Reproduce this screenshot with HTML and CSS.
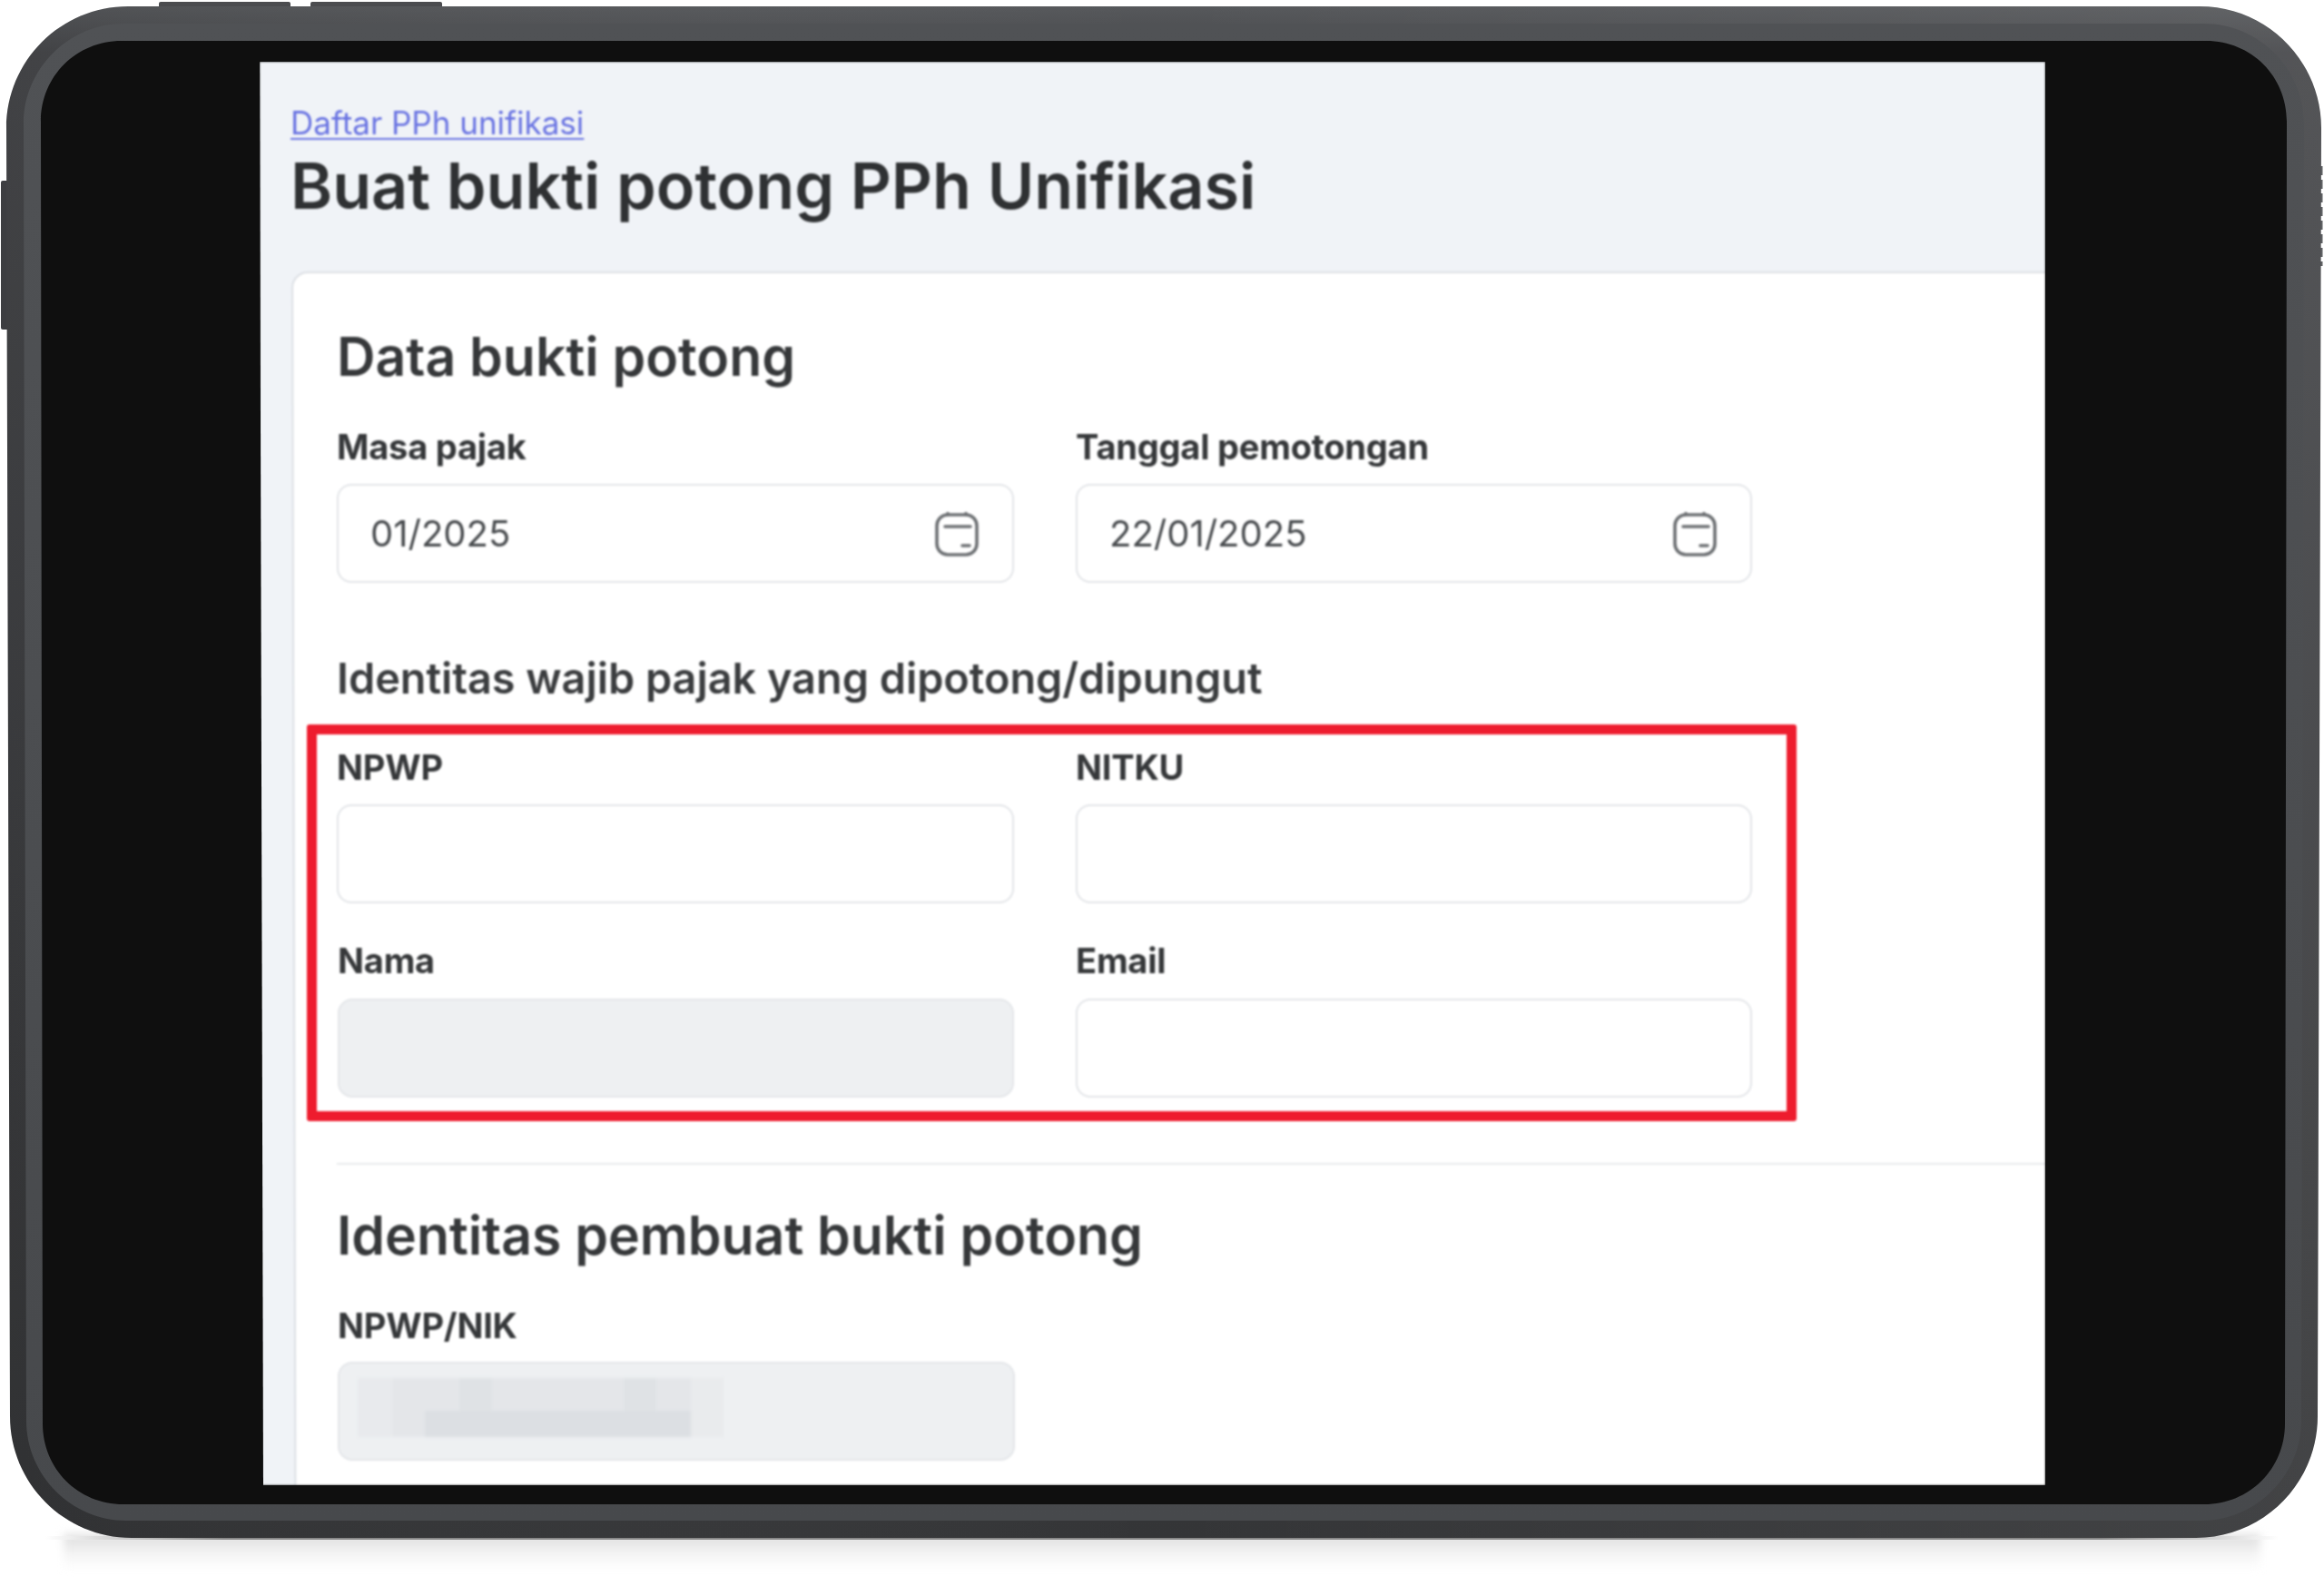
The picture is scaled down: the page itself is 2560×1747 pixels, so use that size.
FILE: index.html
```html
<!DOCTYPE html>
<html lang="id">
<head>
<meta charset="utf-8">
<title>Buat bukti potong PPh Unifikasi</title>
<link rel="stylesheet" href="styles.css">
</head>
<body>
<main class="stage">
  <div class="floor-shadow"></div>
  <div class="floor-line"></div>
  <svg class="device" viewBox="0 0 2560 1747" width="2560" height="1747" aria-hidden="true">
    <defs>
      <linearGradient id="ringV" x1="0" y1="0" x2="0" y2="1">
        <stop offset="0" stop-color="#56585b"/>
        <stop offset="0.03" stop-color="#47484b"/>
        <stop offset="1" stop-color="#343537"/>
      </linearGradient>
      <linearGradient id="ringH" x1="0" y1="0" x2="1" y2="0">
        <stop offset="0" stop-color="#000" stop-opacity="0.08"/>
        <stop offset="0.5" stop-color="#fff" stop-opacity="0"/>
        <stop offset="1" stop-color="#fff" stop-opacity="0.07"/>
      </linearGradient>
      <linearGradient id="bandV" x1="0" y1="0" x2="0" y2="1">
        <stop offset="0" stop-color="#505255"/>
        <stop offset="1" stop-color="#47494c"/>
      </linearGradient>
    </defs>
    <rect class="device-key" x="175" y="2" width="145" height="8" rx="2"/>
    <rect class="device-key" x="342" y="2" width="145" height="8" rx="2"/>
    <rect class="device-key-side" x="1" y="199" width="9" height="164" rx="2"/>
    <line class="device-grille" x1="2557" y1="183" x2="2557" y2="293"/>
    <path fill="url(#ringV)" d="M141 7H2423C2497 7 2557 67 2557 141L2553 1560C2553 1634 2493 1694 2419 1694H145C71 1694 11 1634 11 1560L7 141C7 67 67 7 141 7Z"/>
    <path fill="url(#ringH)" d="M141 7H2423C2497 7 2557 67 2557 141L2553 1560C2553 1634 2493 1694 2419 1694H145C71 1694 11 1634 11 1560L7 141C7 67 67 7 141 7Z"/>
    <path fill="url(#bandV)" d="M136 26H2428C2488 26 2538 76 2538 136L2535 1565C2535 1625 2485 1675 2425 1675H139C79 1675 29 1625 29 1565L26 136C26 76 76 26 136 26Z"/>
    <path fill="#0f0f0f" d="M134 45H2430C2480 45 2519 84 2519 134L2517 1568C2517 1618 2478 1657 2428 1657H136C86 1657 47 1618 47 1568L45 134C45 84 84 45 134 45Z"/>
  </svg>

  <section class="screen">
    <header class="page-head">
      <a class="crumb" href="#">Daftar PPh unifikasi</a>
      <h1 class="page-title">Buat bukti potong PPh Unifikasi</h1>
    </header>

    <div class="card">
      <h2 class="section-title">Data bukti potong</h2>
      <div class="form-grid">
        <div class="group">
          <label class="label">Masa pajak</label>
          <div class="field">
            <span class="value">01/2025</span>
            <svg class="cal" viewBox="0 0 48 50" aria-hidden="true"><path d="M14 2.5V4M34 2.5V4"/><rect x="2" y="4" width="44" height="44" rx="12"/><path d="M11 17H39M30 38H38"/></svg>
          </div>
        </div>
        <div class="group">
          <label class="label">Tanggal pemotongan</label>
          <div class="field">
            <span class="value">22/01/2025</span>
            <svg class="cal" viewBox="0 0 48 50" aria-hidden="true"><path d="M14 2.5V4M34 2.5V4"/><rect x="2" y="4" width="44" height="44" rx="12"/><path d="M11 17H39M30 38H38"/></svg>
          </div>
        </div>
      </div>

      <h3 class="sub-title">Identitas wajib pajak yang dipotong/dipungut</h3>
      <div class="highlighted">
        <div class="form-grid">
          <div class="group"><label class="label">NPWP</label><div class="field"></div></div>
          <div class="group"><label class="label">NITKU</label><div class="field"></div></div>
          <div class="group group-low nudge"><label class="label">Nama</label><div class="field field-off"></div></div>
          <div class="group group-low"><label class="label">Email</label><div class="field"></div></div>
        </div>
      </div>

      <hr class="rule">

      <h2 class="section-title section-last">Identitas pembuat bukti potong</h2>
      <div class="group group-last">
        <label class="label">NPWP/NIK</label>
        <div class="field field-off field-wide">
          <div class="redact"><div class="redact-core"></div></div>
        </div>
      </div>
    </div>
  </section>
</main>
</body>
</html>
```
FILE: styles.css
```css
* { box-sizing: border-box; }
html, body { margin: 0; padding: 0; background: #fff; }
body { font-family: Inter, "Liberation Sans", sans-serif; color: #333; }

.stage { position: relative; width: 2560px; height: 1747px; overflow: hidden; }

.device { position: absolute; left: 0; top: 0; display: block; }
.device-key { fill: #4b4c4f; }
.device-key-side { fill: #3d3e41; }
.device-grille { stroke: #606265; stroke-width: 3; stroke-dasharray: 10 5; }

.floor-shadow {
  position: absolute; left: 70px; top: 1690px; width: 2420px; height: 40px;
  background: linear-gradient(#dcdcdc, #f5f5f5 55%, #fff);
  filter: blur(5px);
}
.floor-line {
  position: absolute; left: 50px; top: 1692px; width: 2460px; height: 4px;
  background: linear-gradient(90deg, #fff, #888 8%, #888 92%, #fff);
}

.screen {
  position: absolute; left: 286px; top: 68px; width: 1967px; height: 1568px;
  overflow: hidden;
  background: #f0f3f7;
  clip-path: polygon(0 0, 100% 0, 100% 100%, 4px 100%);
  filter: blur(0.9px);
}

.page-head { padding: 43px 0 0 34px; }
.crumb {
  display: block; width: max-content;
  font-size: 35px; line-height: 48px; color: #6a74e2;
  text-decoration: underline; text-underline-offset: 4px; text-decoration-thickness: 2px;
}
.page-title {
  margin: 4px 0 0; font-size: 70.1px; line-height: 84px; font-weight: 600;
  color: #2f3133; white-space: nowrap;
}

.card {
  position: relative; margin: 52px -40px 0 35px; height: 1400px;
  padding: 62px 0 0 50px;
}
.card::before {
  content: ""; position: absolute; inset: 0;
  background: #fff; border: 2px solid #dde0e5; border-radius: 18px;
  transform-origin: 0 0; transform: skewX(0.146deg);
}
.card > * { position: relative; }

.section-title { margin: 0; font-size: 58.9px; line-height: 64px; font-weight: 600; color: #36383a; white-space: nowrap; }
.section-last { margin-top: 46px; }
.sub-title { margin: 77px 0 50px; font-size: 46.8px; line-height: 56px; font-weight: 600; color: #3b3d3f; white-space: nowrap; }

.form-grid {
  display: grid; grid-template-columns: 746px 745px; column-gap: 68px; row-gap: 43px;
  margin-top: 47px;
}
.highlighted { position: relative; width: 1559px; }
.highlighted .form-grid { margin-top: 0; }
.highlighted::after {
  content: ""; box-sizing: border-box; position: absolute; left: -33px; top: -27px; width: 1641px; height: 437px;
  border: 11px solid #ee1c2e; border-radius: 3px;
}

.group { display: flex; flex-direction: column; gap: 21px; }
.group-low { gap: 22px; }
.nudge { margin-left: 1px; }
.group-last { margin: 47px 0 0 1px; gap: 20px; width: 746px; }

.label { font-size: 38px; line-height: 40px; font-weight: 650; letter-spacing: -0.2px; color: #36383a; white-space: nowrap; }

.field {
  display: flex; align-items: center; justify-content: space-between;
  height: 109px; padding: 0 37px 0 35px;
  background: #fff; border: 2px solid #e3e5e8; border-radius: 16px;
}
.field-off { background: #eef0f2; border-color: #e4e6e9; }
.field-wide { padding: 0 0 0 20px; align-items: flex-start; }

.value { font-size: 40px; line-height: 46px; color: #4a4d50; }

.cal { width: 48px; height: 50px; fill: none; stroke: #6d7073; stroke-width: 3.6; stroke-linecap: round; }

.redact {
  margin-top: 16px; padding-top: 36px;
  width: 403px; height: 65px; filter: blur(1.5px);
  background: linear-gradient(90deg, #e8eaed 0 38px, #e4e6e9 38px 112px, #dfe2e5 112px 148px, #e4e6e9 148px 293px, #dfe2e5 293px 329px, #e4e6e9 329px 367px, #e9ebed 367px);
}
.redact-core { margin-left: 74px; width: 293px; height: 29px; background: #dcdfe3; }

.rule { margin: 72px 0 0; border: 0; height: 2px; background: #e8eaec; }
```
